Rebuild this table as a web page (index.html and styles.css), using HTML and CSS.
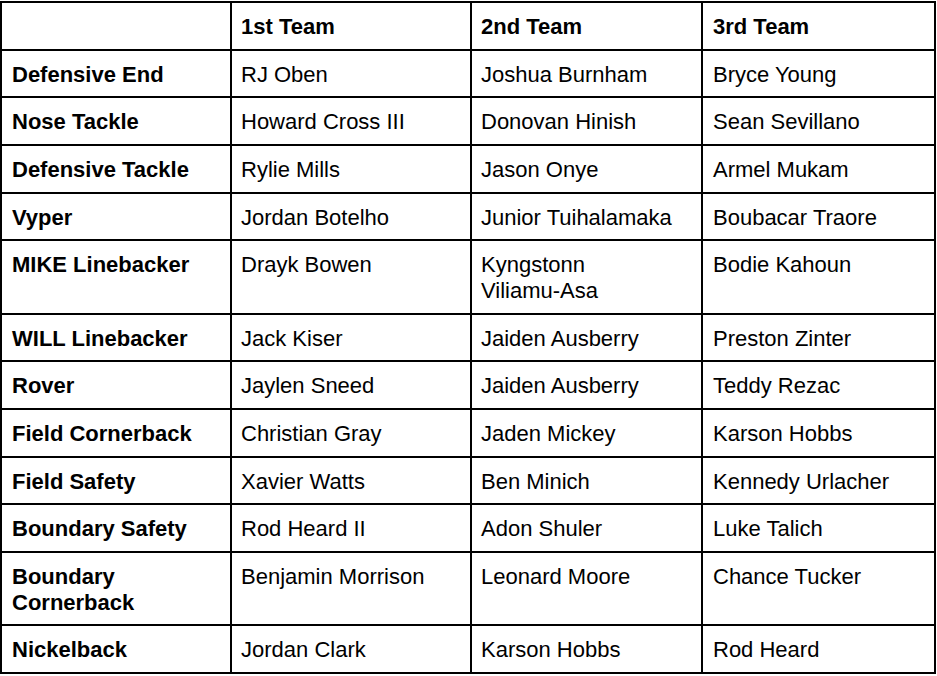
FILE: index.html
```html
<!DOCTYPE html>
<html>
<head>
<meta charset="utf-8">
<link rel="stylesheet" href="styles.css">
</head>
<body>
<table class="depth">
<colgroup>
<col class="w1"><col class="w2"><col class="w3"><col class="w4">
</colgroup>
<tr class="head"><td></td><td>1st Team</td><td>2nd Team</td><td>3rd Team</td></tr>
<tr><th>Defensive End</th><td>RJ Oben</td><td>Joshua Burnham</td><td>Bryce Young</td></tr>
<tr><th>Nose Tackle</th><td>Howard Cross III</td><td>Donovan Hinish</td><td>Sean Sevillano</td></tr>
<tr><th>Defensive Tackle</th><td>Rylie Mills</td><td>Jason Onye</td><td>Armel Mukam</td></tr>
<tr><th>Vyper</th><td>Jordan Botelho</td><td>Junior Tuihalamaka</td><td>Boubacar Traore</td></tr>
<tr><th>MIKE Linebacker</th><td>Drayk Bowen</td><td>Kyngstonn<br>Viliamu-Asa</td><td>Bodie Kahoun</td></tr>
<tr><th>WILL Linebacker</th><td>Jack Kiser</td><td>Jaiden Ausberry</td><td>Preston Zinter</td></tr>
<tr><th>Rover</th><td>Jaylen Sneed</td><td>Jaiden Ausberry</td><td>Teddy Rezac</td></tr>
<tr><th>Field Cornerback</th><td>Christian Gray</td><td>Jaden Mickey</td><td>Karson Hobbs</td></tr>
<tr><th>Field Safety</th><td>Xavier Watts</td><td>Ben Minich</td><td>Kennedy Urlacher</td></tr>
<tr><th>Boundary Safety</th><td>Rod Heard II</td><td>Adon Shuler</td><td>Luke Talich</td></tr>
<tr><th>Boundary<br>Cornerback</th><td>Benjamin Morrison</td><td>Leonard Moore</td><td>Chance Tucker</td></tr>
<tr><th>Nickelback</th><td>Jordan Clark</td><td>Karson Hobbs</td><td>Rod Heard</td></tr>
</table>
</body>
</html>
```

FILE: styles.css
```css
html, body {
  margin: 0;
  padding: 0;
  background: #ffffff;
}
body {
  padding-top: 1px;
  font-family: "Liberation Sans", Arial, sans-serif;
  font-size: 22px;
  line-height: 25.6px;
  color: #000000;
}
.depth {
  width: 936px;
  table-layout: fixed;
  border-collapse: separate;
  border-spacing: 0;
  border-left: 2px solid #000;
  border-top: 2px solid #000;
}
.w1 { width: 230px; }
.w2 { width: 240px; }
.w3 { width: 231px; }
.w4 { width: 233px; }
.depth td,
.depth th {
  box-sizing: border-box;
  padding: 11px 10px 9.1px 9px;
  border-right: 2px solid #000;
  border-bottom: 2px solid #000;
  text-align: left;
  vertical-align: top;
}
.depth th {
  font-weight: bold;
  padding-left: 10px;
}
.depth td:last-child {
  padding-left: 10px;
}
.head td {
  font-weight: bold;
}
```
